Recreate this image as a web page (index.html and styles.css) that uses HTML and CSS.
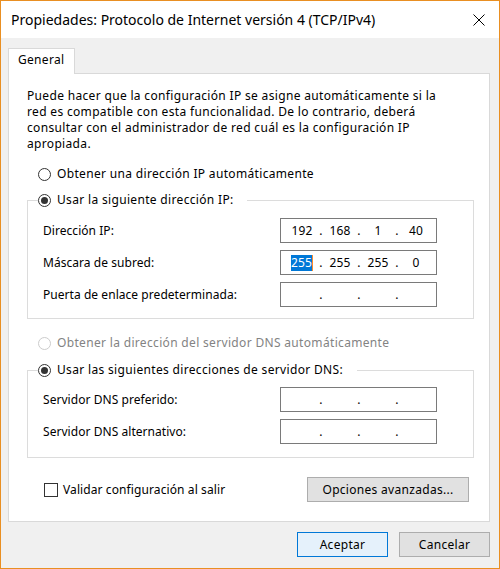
FILE: index.html
```html
<!DOCTYPE html>
<html lang="es">
<head>
<meta charset="utf-8">
<title>Propiedades: Protocolo de Internet versión 4 (TCP/IPv4)</title>
<link rel="stylesheet" href="styles.css">
</head>
<body>
<div class="window">
  <div class="titlebar">
    <span class="title">Propiedades: Protocolo de Internet versión 4 (TCP/IPv4)</span>
    <svg class="close" viewBox="0 0 12 12" width="12" height="12" aria-hidden="true"><path d="M0.5 0.5 L11.5 11.5 M11.5 0.5 L0.5 11.5" stroke="#000" stroke-width="1" fill="none"/></svg>
  </div>
  <div class="content">
    <div class="tabs"><div class="tab">General</div></div>
    <div class="panel">
      <p class="intro">Puede hacer que la configuración IP se asigne automáticamente si la<br>red es compatible con esta funcionalidad. De lo contrario, deberá<br>consultar con el administrador de red cuál es la configuración IP<br>apropiada.</p>
      <div class="radio radio-first"><span class="dot"></span>Obtener una dirección IP automáticamente</div>
      <fieldset class="group group-ip">
        <legend class="legend legend-ip"><span class="dot checked"></span>Usar la siguiente dirección IP:</legend>
        <div class="row"><span class="label">Dirección IP:</span>
          <div class="ipbox"><span class="seg">192</span><span class="sep">.</span><span class="seg">168</span><span class="sep">.</span><span class="seg">1</span><span class="sep">.</span><span class="seg">40</span></div>
        </div>
        <div class="row"><span class="label">Máscara de subred:</span>
          <div class="ipbox"><span class="seg"><span class="sel">255</span></span><span class="sep">.</span><span class="seg">255</span><span class="sep">.</span><span class="seg">255</span><span class="sep">.</span><span class="seg">0</span></div>
        </div>
        <div class="row"><span class="label">Puerta de enlace predeterminada:</span>
          <div class="ipbox"><span class="seg"></span><span class="sep">.</span><span class="seg"></span><span class="sep">.</span><span class="seg"></span><span class="sep">.</span><span class="seg"></span></div>
        </div>
      </fieldset>
      <div class="radio radio-disabled"><span class="dot off"></span>Obtener la dirección del servidor DNS automáticamente</div>
      <fieldset class="group group-dns">
        <legend class="legend legend-dns"><span class="dot checked"></span>Usar las siguientes direcciones de servidor DNS:</legend>
        <div class="row"><span class="label">Servidor DNS preferido:</span>
          <div class="ipbox"><span class="seg"></span><span class="sep">.</span><span class="seg"></span><span class="sep">.</span><span class="seg"></span><span class="sep">.</span><span class="seg"></span></div>
        </div>
        <div class="row"><span class="label">Servidor DNS alternativo:</span>
          <div class="ipbox"><span class="seg"></span><span class="sep">.</span><span class="seg"></span><span class="sep">.</span><span class="seg"></span><span class="sep">.</span><span class="seg"></span></div>
        </div>
      </fieldset>
      <div class="footer">
        <div class="check"><span class="box"></span>Validar configuración al salir</div>
        <button class="btn btn-adv" type="button">Opciones avanzadas...</button>
      </div>
    </div>
    <div class="actions">
      <button class="btn btn-primary" type="button">Aceptar</button>
      <button class="btn" type="button">Cancelar</button>
    </div>
  </div>
</div>
</body>
</html>
```
FILE: styles.css
```css
html, body {
  margin: 0;
  padding: 0;
  background: #fff;
}
body {
  font-family: "Noto Sans", "Open Sans", sans-serif;
  font-size: 12px;
  line-height: 16px;
  letter-spacing: 0.3px;
  color: #000;
}
.window {
  width: 500px;
  height: 569px;
  box-sizing: border-box;
  border: 1px solid #e98f22;
  background: #f0f0f0;
  display: flex;
  flex-direction: column;
}
.titlebar {
  flex: none;
  height: 37px;
  background: #fff;
  display: flex;
  align-items: center;
  justify-content: space-between;
  padding: 0 14px 0 10px;
}
.title {
  font-size: 14px;
  line-height: 20px;
  letter-spacing: 0;
  color: #000;
}
.close {
  display: block;
  width: 12px;
  height: 12px;
}
.content {
  flex: 1;
  display: flex;
  flex-direction: column;
  padding: 10px 9px 0 7px;
}
.tabs {
  display: flex;
}
.tab {
  position: relative;
  z-index: 1;
  box-sizing: border-box;
  width: 67px;
  height: 26px;
  margin-bottom: -1px;
  padding: 3px 0 0 9px;
  border: 1px solid #d9d9d9;
  border-bottom: 0;
  background: #fff;
}
.panel {
  background: #fff;
  border: 1px solid #d9d9d9;
  padding: 14px 15px 19px 18px;
}
.intro {
  margin: 0;
  line-height: 16px;
  letter-spacing: 0.33px;
  white-space: nowrap;
}
.radio {
  display: flex;
  align-items: center;
  height: 16px;
  margin-left: 11px;
  letter-spacing: 0.33px;
}
.radio-first {
  margin-top: 14px;
}
.radio-disabled {
  margin-top: 16px;
  color: #838383;
}
.dot {
  flex: none;
  box-sizing: border-box;
  width: 13px;
  height: 13px;
  border: 1px solid #333;
  border-radius: 50%;
  background: #fff;
  margin-right: 6px;
  display: flex;
  align-items: center;
  justify-content: center;
}
.dot.checked::after {
  content: "";
  width: 7px;
  height: 7px;
  border-radius: 50%;
  background: #333;
}
.dot.off {
  border-color: #cccccc;
}
.group {
  margin: 10px 0 0;
  padding: 10px 0 11px;
  border: 1px solid #dcdcdc;
  min-width: 0;
}
.group-dns {
  margin-top: 11px;
  padding: 9px 0 13px;
}
.legend {
  display: flex;
  align-items: center;
  height: 16px;
  padding: 0;
  margin-left: 10px;
  box-sizing: border-box;
  letter-spacing: 0.33px;
  white-space: nowrap;
}
.legend-ip {
  width: 209px;
}
.legend-dns {
  width: 319px;
}
.row {
  display: flex;
  align-items: center;
  justify-content: space-between;
  height: 25px;
  padding: 0 36px 0 15px;
}
.row + .row {
  margin-top: 7px;
}
.label {
  letter-spacing: 0.05px;
}
.ipbox {
  box-sizing: border-box;
  width: 157px;
  height: 25px;
  border: 1px solid #7a7a7a;
  background: #fff;
  padding-left: 4px;
  display: grid;
  grid-template-columns: 34px 4px 34px 4px 34px 4px 34px;
  align-items: center;
  letter-spacing: 0.2px;
}
.seg,
.sep {
  text-align: center;
  line-height: 16px;
  height: 16px;
}
.sel {
  display: inline-block;
  background: #0078d7;
  color: #fff;
  border-right: 1px solid #ff8a28;
}
.footer {
  display: flex;
  align-items: center;
  justify-content: space-between;
  height: 25px;
  margin-top: 19px;
  padding: 0 5px 0 17px;
}
.check {
  display: flex;
  align-items: center;
  letter-spacing: 0.1px;
}
.box {
  box-sizing: border-box;
  width: 14px;
  height: 14px;
  border: 1px solid #333;
  background: #fff;
  margin-right: 5px;
}
.btn {
  font-family: inherit;
  font-size: 12px;
  line-height: 16px;
  letter-spacing: 0.3px;
  color: #000;
  box-sizing: border-box;
  height: 25px;
  padding: 0;
  border: 1px solid #adadad;
  background: #e1e1e1;
}
.btn-adv {
  width: 162px;
}
.actions {
  display: flex;
  justify-content: flex-end;
  gap: 11px;
  margin-top: 10px;
}
.actions .btn {
  width: 91px;
}
.btn-primary {
  border-color: #0078d7;
  background: #e5f1fb;
}
```
